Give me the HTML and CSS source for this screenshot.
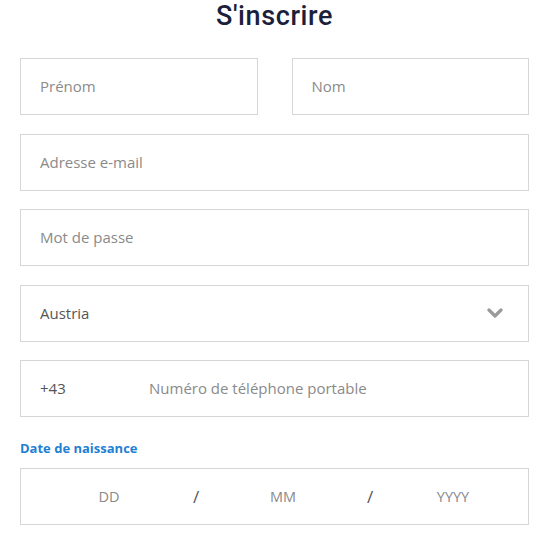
FILE: index.html
```html
<!DOCTYPE html>
<html lang="fr">
<head>
<meta charset="utf-8">
<title>S'inscrire</title>
<link rel="stylesheet" href="styles.css">
</head>
<body>
<form class="signup">
  <h1 class="title">S'inscrire</h1>
  <div class="row two">
    <div class="field"><span class="ph">Prénom</span></div>
    <div class="field"><span class="ph">Nom</span></div>
  </div>
  <div class="row"><div class="field"><span class="ph">Adresse e-mail</span></div></div>
  <div class="row"><div class="field"><span class="ph">Mot de passe</span></div></div>
  <div class="row">
    <div class="field select">
      <span class="val">Austria</span>
      <svg class="chev" width="16" height="10" viewBox="0 0 16 10"><path d="M2 2 L8 8 L14 2" fill="none" stroke="#9a9a9a" stroke-width="3.2" stroke-linecap="round" stroke-linejoin="round"/></svg>
    </div>
  </div>
  <div class="row">
    <div class="field phone">
      <span class="val code">+43</span>
      <span class="ph">Numéro de téléphone portable</span>
    </div>
  </div>
  <div class="label">Date de naissance</div>
  <div class="field date">
    <span class="part">DD</span>
    <span class="slash">/</span>
    <span class="part">MM</span>
    <span class="slash">/</span>
    <span class="part year">YYYY</span>
  </div>
</form>
</body>
</html>
```
FILE: styles.css
```css
html, body {
  margin: 0;
  padding: 0;
  background: #ffffff;
}
body {
  font-family: "Open Sans", "DejaVu Sans", sans-serif;
}
.signup {
  width: 509px;
  margin-left: 20px;
}
.title {
  margin: 0;
  height: 58px;
  font-family: Roboto, "Open Sans", sans-serif;
  font-size: 27px;
  line-height: normal;
  font-weight: 500;
  text-align: center;
  color: #1b1f3b;
  letter-spacing: 0.6px;
}
.row {
  margin-bottom: 18.5px;
}
.row.two {
  display: grid;
  grid-template-columns: 1fr 1fr;
  column-gap: 34px;
}
.field {
  box-sizing: border-box;
  height: 57px;
  border: 1px solid #d6d6d6;
  display: flex;
  align-items: center;
  padding: 0 19px 1px;
  font-size: 15px;
}
.ph {
  color: #8a8a8a;
}
.val {
  color: #555555;
}
.select {
  justify-content: space-between;
  padding-right: 25px;
}
.chev {
  display: block;
}
.code {
  width: 109px;
}
.label {
  height: 32.5px;
  font-size: 13px;
  font-weight: 700;
  color: #1f7fd3;
  line-height: 16px;
  padding-top: 4px;
  box-sizing: border-box;
}
.date {
  padding: 0 0 1px 58px;
  display: grid;
  grid-template-columns: 60px 60px 60px 60px 60px;
  column-gap: 27px;
}
.part {
  text-align: center;
  color: #8a8a8a;
  font-size: 14.5px;
}
.slash {
  text-align: center;
  color: #555555;
  font-size: 17px;
}
.year {
  margin-left: -8px;
}
```
